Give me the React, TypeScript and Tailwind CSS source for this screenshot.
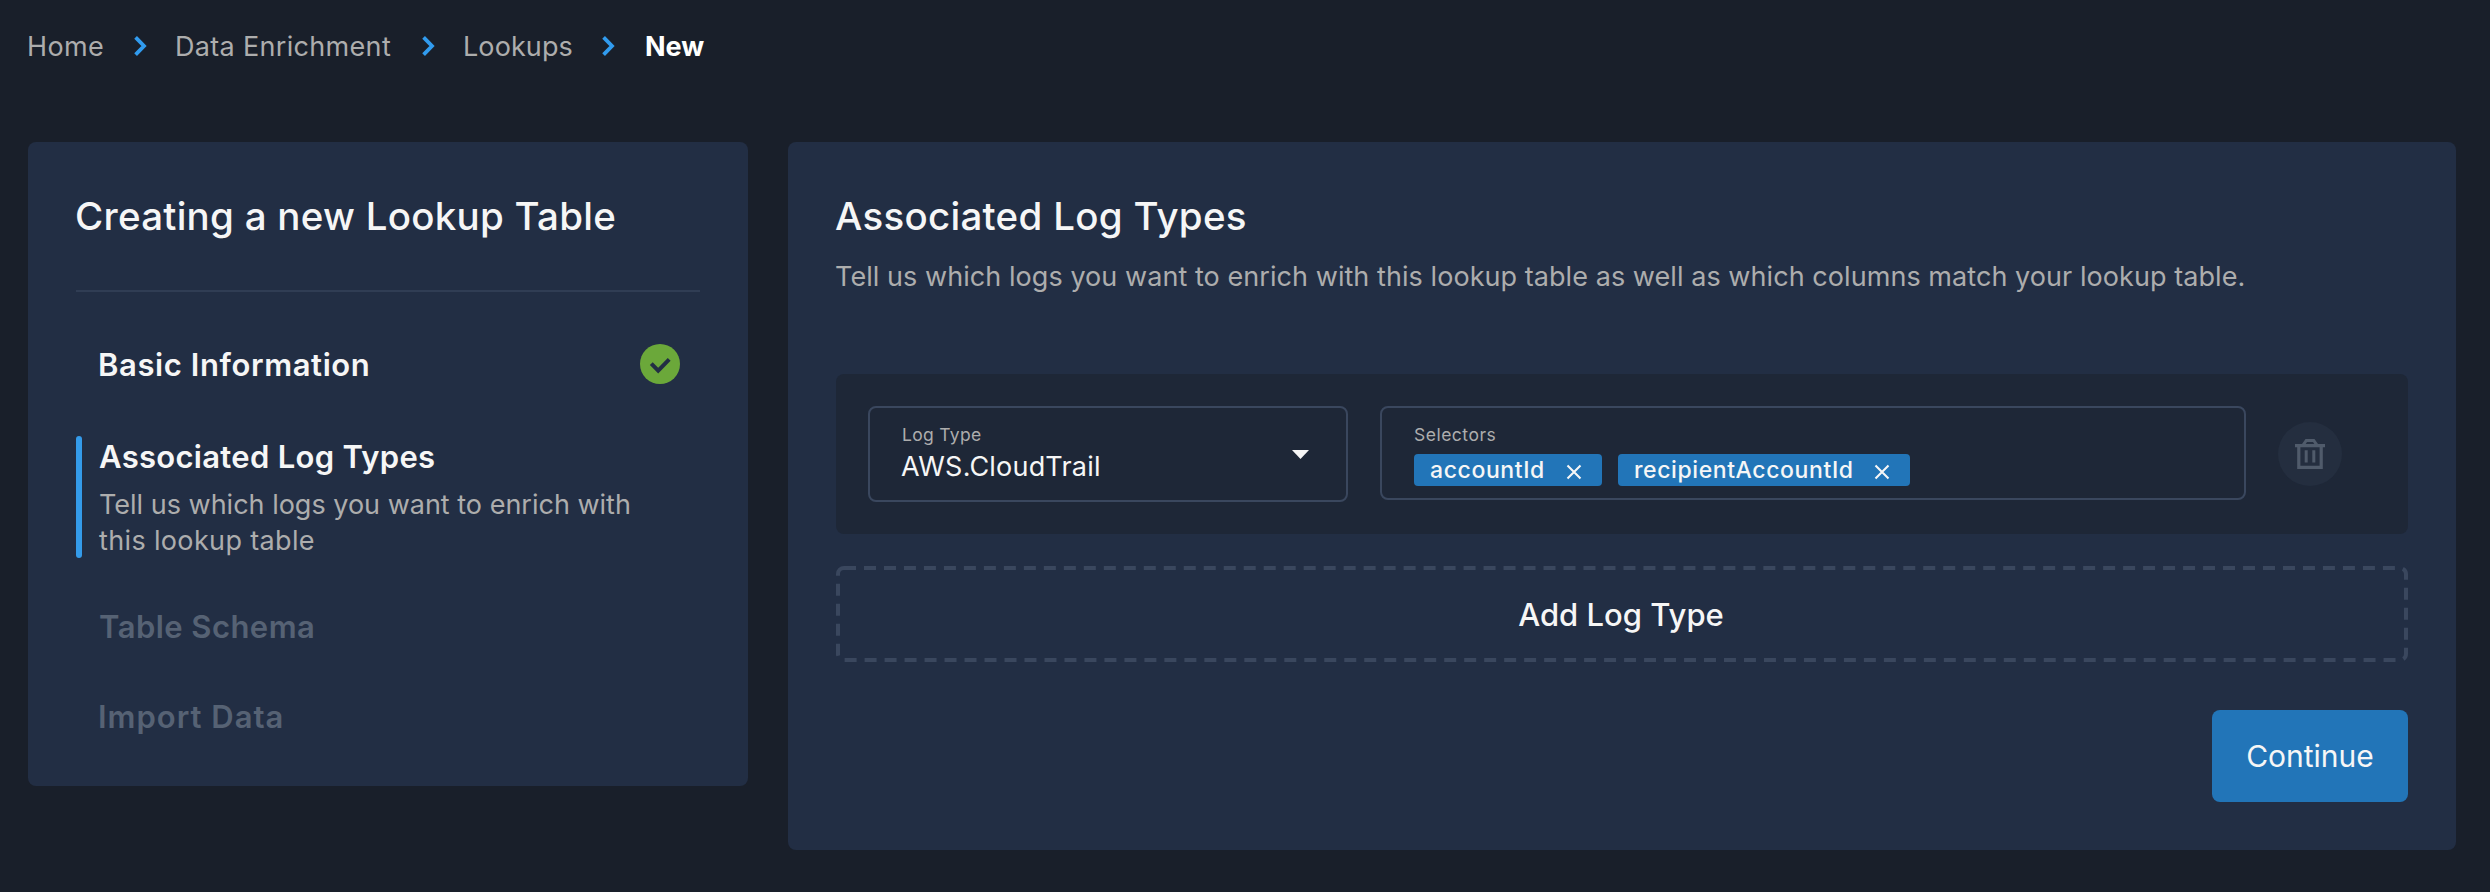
import type { ReactNode } from "react";

function Chevron() {
  return (
    <svg width="13" height="20" viewBox="0 0 13 20" fill="none" className="block">
      <path d="M1.6 1.4 10 10l-8.4 8.6" stroke="#319bee" strokeWidth="3.8" />
    </svg>
  );
}

function Crumb({ className, children }: { className: string; children: ReactNode }) {
  return <li className={`shrink-0 whitespace-nowrap ${className}`}>{children}</li>;
}

function Breadcrumbs() {
  return (
    <nav className="pt-[29px] pl-[27px]">
      <ol className="flex h-9 items-center text-[27px] leading-9 text-[#adadad]">
        <Crumb className="w-[107px] tracking-[0.4px]">Home</Crumb>
        <Crumb className="w-[41px] pb-0.5"><Chevron /></Crumb>
        <Crumb className="w-[247px] tracking-[0.32px]">Data Enrichment</Crumb>
        <Crumb className="w-[41px] pb-0.5"><Chevron /></Crumb>
        <Crumb className="w-[139px] tracking-[0.1px]">Lookups</Crumb>
        <Crumb className="w-[43px] pb-0.5"><Chevron /></Crumb>
        <Crumb className="font-bold text-white">New</Crumb>
      </ol>
    </nav>
  );
}

function CheckBadge() {
  return (
    <svg width="40" height="40" viewBox="0 0 40 40" fill="none">
      <circle cx="20" cy="20" r="20" fill="#6ba83a" />
      <path d="M11.3 19.6 18.2 26.6 29.2 15.4" stroke="#222e44" strokeWidth="4" />
    </svg>
  );
}

function TrashIcon() {
  return (
    <svg width="30" height="30" viewBox="0 0 30 30" fill="none">
      <path
        fill="#505b6b"
        fillRule="evenodd"
        d="M10.5 0h9l3.5 5h7v3.2h-2.2V30H2.2V8.2H0V5h7zM12 3l-1.3 2h8.6L18 3zM5.4 8.2V26.8h19.2V8.2z"
      />
      <path stroke="#505b6b" strokeWidth="3" d="M11.2 11.2v12.4M18.8 11.2v12.4" />
    </svg>
  );
}

function Chip({ label, width }: { label: string; width: string }) {
  return (
    <span className={`flex h-8 items-center justify-between rounded-[4px] bg-[#2275b8] pr-5 pl-4 ${width}`}>
      <span className="text-[23px] leading-8 font-medium tracking-[0.6px] text-[#f6f6f6]">{label}</span>
      <svg width="16" height="16" viewBox="0 0 16 16" fill="none" className="mt-1">
        <path d="M1.5 1.5 14.5 14.5M14.5 1.5 1.5 14.5" stroke="#f6f6f6" strokeWidth="2.1" />
      </svg>
    </span>
  );
}

function Sidebar() {
  return (
    <aside className="h-[644px] w-[720px] shrink-0 rounded-lg bg-[#222e44] px-12 pt-[50px]">
      <h1 className="-ml-px text-[38.5px] leading-12 font-medium tracking-[0.26px] whitespace-nowrap text-[#f6f6f6]">
        Creating a new Lookup Table
      </h1>
      <hr className="mt-[50px] h-0.5 border-0 bg-[#303d54]" />
      <ol className="text-[31px] leading-10 font-semibold">
        <li className="mt-[52px] flex h-10 items-center justify-between pr-5 pl-[22px] tracking-[0.6px] text-[#f6f6f6]">
          <span className="pt-0.5">Basic Information</span>
          <CheckBadge />
        </li>
        <li className="mt-[52px] flex h-[122px] gap-4 text-[#f6f6f6]">
          <span className="w-1.5 rounded-[3px] bg-[#349bea]" />
          <div className="pt-px pl-px">
            <div className="tracking-[0.3px]">Associated Log Types</div>
            <p className="mt-[10px] w-[560px] text-[27px] leading-9 font-normal text-[#adadad]">
              <span className="block">Tell us which logs you want to enrich with</span>
              <span className="block tracking-[0.35px]">this lookup table</span>
            </p>
          </div>
        </li>
        <li className="mt-[49px] pl-[23px] tracking-[0.45px] text-[#566274]">Table Schema</li>
        <li className="mt-[50px] pl-[22px] tracking-[1px] text-[#566274]">Import Data</li>
      </ol>
    </aside>
  );
}

function LogTypeRow() {
  return (
    <div className="mt-[79px] flex h-40 items-start rounded-lg bg-[#1e2737] px-8 pt-8">
      <div className="flex h-24 w-[480px] items-center justify-between rounded-lg border-2 border-[#3a475e] pr-[37px] pl-[31px]">
        <div className="-mt-[2px]">
          <div className="pl-px text-[17.5px] leading-6 tracking-[0.3px] text-[#adadad]">Log Type</div>
          <div className="mt-1 text-[27px] leading-8 tracking-[0.2px] text-[#f6f6f6]">AWS.CloudTrail</div>
        </div>
        <svg width="17" height="9" viewBox="0 0 17 9">
          <path d="M0 0h17L8.5 9z" fill="#f6f6f6" />
        </svg>
      </div>
      <div className="ml-8 h-[94px] w-[866px] rounded-lg border-2 border-[#3a475e] pt-[15px] pl-8">
        <div className="text-[17.5px] leading-6 tracking-[0.5px] text-[#adadad]">Selectors</div>
        <div className="mt-[7px] flex gap-4">
          <Chip label="accountId" width="w-[188px]" />
          <Chip label="recipientAccountId" width="w-[292px]" />
        </div>
      </div>
      <button aria-label="Remove" className="mt-4 ml-8 flex size-16 items-center justify-center rounded-full bg-[#242e3f]">
        <TrashIcon />
      </button>
    </div>
  );
}

export default function App() {
  return (
    <div className="h-[892px] w-[2490px] overflow-hidden bg-[#191f2a] font-['Inter','Liberation_Sans',sans-serif]">
      <Breadcrumbs />
      <div className="mt-[77px] flex items-start gap-10 px-7">
        <Sidebar />
        <main className="h-[708px] w-[1668px] shrink-0 rounded-lg bg-[#222e44] px-12 pt-[50px]">
          <h2 className="-ml-px text-[38.5px] leading-12 font-medium tracking-[0.28px] text-[#f6f6f6]">Associated Log Types</h2>
          <p className="mt-[19px] -ml-px text-[27px] leading-9 tracking-[0.06px] whitespace-nowrap text-[#adadad]">
            Tell us which logs you want to enrich with this lookup table as well as which columns match your lookup table.
          </p>
          <LogTypeRow />
          <button className="relative mt-8 flex h-24 w-full items-center justify-center pt-0.5 pr-0.5 text-[31px] font-medium text-[#f6f6f6]">
            <svg className="absolute inset-0" width="1572" height="96" fill="none">
              <rect x="2" y="2" width="1568" height="92" rx="6" stroke="#3a475e" strokeWidth="4" strokeDasharray="12 7.986" />
            </svg>
            Add Log Type
          </button>
          <div className="mt-12 flex justify-end">
            <button className="h-[92px] w-[196px] rounded-lg bg-[#2275b8] text-[30px] text-[#f6f6f6]">
              Continue
            </button>
          </div>
        </main>
      </div>
    </div>
  );
}
